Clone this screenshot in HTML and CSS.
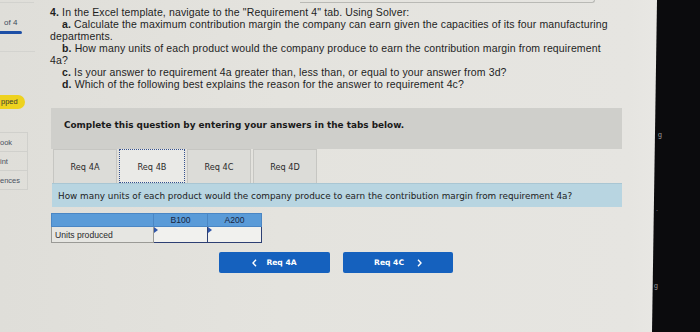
FILE: index.html
```html
<!DOCTYPE html>
<html>
<head>
<meta charset="utf-8">
<link rel="stylesheet" href="styles.css">
</head>
<body>
<div class="screen">
  <aside class="side">
    <div class="side-top"></div>
    <div class="count">of 4</div>
    <div class="progress"></div>
    <div class="side-sep"></div>
    <div class="pill">pped</div>
    <ul class="tools">
      <li>ook</li>
      <li>int</li>
      <li>ences</li>
    </ul>
  </aside>

  <main class="main">
    <div class="top-edge"></div>
    <div class="question">
      <p class="q-title"><b>4.</b> In the Excel template, navigate to the "Requirement 4" tab. Using Solver:</p>
      <p class="q-item"><b>a.</b> Calculate the maximum contribution margin the company can earn given the capacities of its four manufacturing<br>departments.</p>
      <p class="q-item"><b>b.</b> How many units of each product would the company produce to earn the contribution margin from requirement<br>4a?</p>
      <p class="q-item"><b>c.</b> Is your answer to requirement 4a greater than, less than, or equal to your answer from 3d?</p>
      <p class="q-item"><b>d.</b> Which of the following best explains the reason for the answer to requirement 4c?</p>
    </div>

    <div class="instructions">Complete this question by entering your answers in the tabs below.</div>

    <div class="tabs">
      <div class="tab">Req 4A</div>
      <div class="tab tab-active">Req 4B</div>
      <div class="tab">Req 4C</div>
      <div class="tab">Req 4D</div>
    </div>

    <div class="prompt">How many units of each product would the company produce to earn the contribution margin from requirement 4a?</div>

    <table class="grid">
      <tr class="grid-head">
        <th class="col-label"></th>
        <th class="col-val">B100</th>
        <th class="col-val">A200</th>
      </tr>
      <tr>
        <td class="row-label">Units produced</td>
        <td class="cell-input"></td>
        <td class="cell-input"></td>
      </tr>
    </table>

    <div class="nav">
      <div class="nav-btn">
        <svg class="chev" width="5" height="8" viewBox="0 0 5 8"><polyline points="4,0.8 1,4 4,7.2" fill="none" stroke="#fff" stroke-width="1.4"/></svg>
        <span>Req 4A</span>
      </div>
      <div class="nav-btn nav-next">
        <span>Req 4C</span>
        <svg class="chev" width="5" height="8" viewBox="0 0 5 8"><polyline points="1,0.8 4,4 1,7.2" fill="none" stroke="#fff" stroke-width="1.4"/></svg>
      </div>
    </div>
  </main>

  <div class="bezel">
    <span class="glint g1">g</span>
    <span class="glint g2">.</span>
    <span class="glint g3">g</span>
  </div>
</div>
</body>
</html>
```

FILE: styles.css
```css
* { box-sizing: border-box; }
html, body { margin: 0; padding: 0; }
body {
  width: 700px;
  height: 332px;
  overflow: hidden;
  background: #e3e2dd;
  font-family: "Liberation Sans", Arial, sans-serif;
  color: #222;
}
.screen {
  display: flex;
  width: 700px;
  height: 332px;
  background: linear-gradient(90deg, #dfded9 0%, #e4e3de 40%, #e6e5e1 90%, #ecebe8 100%);
}

/* sidebar */
.side {
  flex: 0 0 50px;
  display: flex;
  flex-direction: column;
}
.side-top {
  width: 34px;
  height: 3px;
  border-bottom: 1px solid #d2d2ce;
}
.count {
  margin-top: 15px;
  padding-left: 4px;
  font-size: 8px;
  line-height: 9px;
  color: #404a5c;
}
.progress {
  margin-top: 4px;
  width: 22px;
  height: 3px;
  background: #1d4fa6;
  border-radius: 0 2px 2px 0;
}
.side-sep {
  margin-top: 17px;
  width: 35px;
  height: 1px;
  background: #d3d3cf;
}
.pill {
  margin-top: 43px;
  width: 25px;
  height: 14px;
  background: #eed21f;
  border-radius: 0 7px 7px 0;
  font-size: 7.5px;
  line-height: 14px;
  color: #3a3a30;
  padding-left: 1px;
}
.tools {
  list-style: none;
  margin: 24px 0 0;
  padding: 0;
  width: 28px;
}
.tools li {
  height: 20px;
  border: 1px solid #d0d0cc;
  border-left: none;
  margin-top: -1px;
  font-size: 7.5px;
  line-height: 19px;
  color: #4a5262;
}

/* main */
.main {
  flex: 0 0 572px;
  display: flex;
  flex-direction: column;
  align-items: flex-start;
}
.main > .question,
.main > .instructions,
.main > .prompt { align-self: stretch; }
.top-edge {
  margin-left: 250px;
  width: 295px;
  height: 3px;
  border-bottom: 1px solid #b9b9b5;
  border-right: 1px solid #b9b9b5;
  border-bottom-right-radius: 4px;
}
.question {
  margin-top: 3px;
  font-size: 10.5px;
  line-height: 12px;
  letter-spacing: 0.13px;
  color: #1e1e1e;
}
.question p {
  margin: 0;
  white-space: nowrap;
}
.question b { font-weight: 700; }
.q-item { text-indent: 12px; }

.instructions {
  margin-top: 18px;
  margin-left: 1px;
  height: 41px;
  background: #cfcfcb;
  padding: 12px 0 0 13px;
  font-family: "DejaVu Sans", Verdana, sans-serif;
  font-weight: 700;
  font-size: 8.9px;
  line-height: 11px;
  color: #1a1a1a;
  white-space: nowrap;
}

.tabs {
  display: flex;
  margin-left: 3px;
  height: 34px;
  gap: 2px;
}
.tab {
  width: 64px;
  height: 34px;
  background: #dcdcd8;
  border: 1px solid #c6c6c2;
  border-bottom: none;
  display: flex;
  align-items: center;
  justify-content: center;
  font-family: "DejaVu Sans", Verdana, sans-serif;
  font-size: 8.2px;
  color: #2a2a2a;
  padding-top: 1px;
}
.tab-active {
  width: 66px;
  background: #eaeae7;
  border: 1px dotted #34508e;
}

.prompt {
  margin-left: 2px;
  height: 24px;
  background: #b8d5e1;
  border-top: 1px solid #a9c6d3;
  padding-left: 6px;
  font-family: "DejaVu Sans", Verdana, sans-serif;
  font-size: 8.85px;
  line-height: 24px;
  color: #1c1c1c;
  white-space: nowrap;
}

.grid {
  margin-top: 6px;
  margin-left: 1px;
  width: 211px;
  table-layout: fixed;
  border-collapse: collapse;
  font-family: "Liberation Sans", Arial, sans-serif;
  font-size: 8.6px;
}
.grid th, .grid td { padding: 0; }
.grid-head th {
  height: 13px;
  background: #5a9bd8;
  border: 1px solid #4a86c4;
  font-weight: 400;
  color: #1a2640;
  text-align: center;
  line-height: 11px;
}
.col-label { width: 102px; }
.col-val { width: 54px; }
.row-label {
  height: 16px;
  background: #e6e6e2;
  border: 1px solid #9a9a96;
  color: #2a2a2a;
  padding-left: 3px !important;
  line-height: 14px;
}
.cell-input {
  position: relative;
  height: 16px;
  background: #f1f1ee;
  border: 1px solid #2d3f73;
}
.cell-input::before {
  content: "";
  position: absolute;
  left: 0;
  top: 0;
  border-top: 3px solid transparent;
  border-bottom: 3px solid transparent;
  border-left: 4px solid #2f55a8;
}

.nav {
  display: flex;
  gap: 13px;
  margin-top: 9px;
  margin-left: 169px;
}
.nav-btn {
  width: 111px;
  height: 21px;
  background: #1561be;
  border-radius: 2px;
  display: flex;
  align-items: center;
  justify-content: center;
  gap: 9px;
  font-family: "DejaVu Sans", Verdana, sans-serif;
  font-weight: 700;
  font-size: 7.6px;
  color: #fff;
}
.nav-next { width: 110px; gap: 13px; }
.chev { display: block; }

/* bezel */
.bezel {
  position: relative;
  margin-left: auto;
  width: 50px;
  height: 332px;
  background: #0b0b0d;
  clip-path: polygon(7px 0, 100% 0, 100% 100%, 2px 100%);
}
.glint {
  position: absolute;
  font-family: "Liberation Sans", Arial, sans-serif;
  font-size: 7px;
  line-height: 7px;
  color: #9a9a9a;
}
.g1 { left: 8px; top: 131px; }
.g2 { left: 6px; top: 205px; }
.g3 { left: 4px; top: 282px; }
```
